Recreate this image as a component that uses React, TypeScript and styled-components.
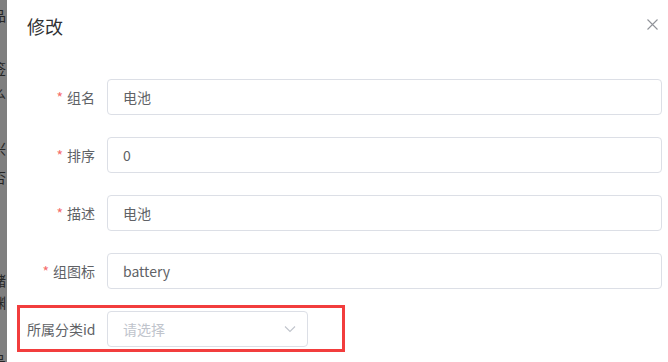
import React from "react";
import styled, { createGlobalStyle } from "styled-components";

const GlobalStyle = createGlobalStyle`
  html, body {
    margin: 0;
    padding: 0;
    background: #fff;
    font-family: "Noto Sans CJK SC", "Liberation Sans", sans-serif;
  }
  * { box-sizing: border-box; }
`;

const Page = styled.div`
  position: relative;
  display: flex;
  width: 668px;
  height: 362px;
  overflow: hidden;
`;

// the page behind the modal, mostly hidden, dimmed by the mask
const Backdrop = styled.div`
  width: 7px;
  flex-shrink: 0;
  background: #7f7f7f;
  overflow: hidden;
  display: flex;
  flex-direction: column;
`;

const Ghost = styled.span<{ $gap: number }>`
  display: block;
  margin-top: ${(p) => p.$gap}px;
  margin-left: -8px;
  font-size: 14px;
  line-height: 16px;
  color: #262626;
  white-space: nowrap;
`;

const Dialog = styled.div`
  flex: 1;
  background: #fff;
  display: flex;
  flex-direction: column;
`;

const Header = styled.div`
  display: flex;
  align-items: center;
  justify-content: space-between;
  padding: 14px 10px 11px 20px;
`;

const Title = styled.span`
  font-size: 18px;
  line-height: 24px;
  color: #303133;
`;

const Close = styled.button`
  border: none;
  background: none;
  padding: 0;
  width: 11px;
  height: 11px;
  display: flex;
  cursor: pointer;
  margin-top: -4px;
`;

const Body = styled.div`
  padding: 30px 6px 0 20px;
  display: flex;
  flex-direction: column;
  gap: 22px;
`;

const Row = styled.div`
  display: flex;
  align-items: center;
`;

const Label = styled.label`
  width: 80px;
  flex-shrink: 0;
  padding-right: 12px;
  text-align: right;
  font-size: 14px;
  line-height: 36px;
  color: #606266;
  white-space: nowrap;
`;

const Star = styled.span`
  color: #f56c6c;
  margin-right: 4px;
`;

const Field = styled.div<{ $width?: number }>`
  flex: ${(p) => (p.$width ? "none" : "1")};
  width: ${(p) => (p.$width ? `${p.$width}px` : "auto")};
  height: 36px;
  border: 1px solid #dcdfe6;
  border-radius: 4px;
  display: flex;
  align-items: center;
  justify-content: space-between;
  padding: 0 11px 0 15px;
  font-size: 14px;
  color: ${(p) => (p.$width ? "#c0c4cc" : "#606266")};
`;

const Highlight = styled.div`
  position: absolute;
  left: 17px;
  top: 305px;
  width: 328px;
  height: 47px;
  border: 3px solid #f23d3d;
  pointer-events: none;
`;

const rows = [
  { label: "组名", value: "电池" },
  { label: "排序", value: "0" },
  { label: "描述", value: "电池" },
  { label: "组图标", value: "battery" },
];

export default function App() {
  return (
    <Page>
      <GlobalStyle />
      <Backdrop>
        <Ghost $gap={7}>品</Ghost>
        <Ghost $gap={37}>签</Ghost>
        <Ghost $gap={8}>么</Ghost>
        <Ghost $gap={40}>兴</Ghost>
        <Ghost $gap={13}>否</Ghost>
        <Ghost $gap={87}>储</Ghost>
        <Ghost $gap={6}>渊</Ghost>
        <Ghost $gap={42}>品</Ghost>
      </Backdrop>
      <Dialog>
        <Header>
          <Title>修改</Title>
          <Close aria-label="close">
            <svg width="11" height="11" viewBox="0 0 11 11">
              <path d="M0.5 0.5L10.5 10.5M10.5 0.5L0.5 10.5" stroke="#909399" strokeWidth="1.1" fill="none" />
            </svg>
          </Close>
        </Header>
        <Body>
          {rows.map((r) => (
            <Row key={r.label}>
              <Label>
                <Star>*</Star>
                {r.label}
              </Label>
              <Field>{r.value}</Field>
            </Row>
          ))}
          <Row>
            <Label>所属分类id</Label>
            <Field $width={201}>
              请选择
              <svg width="12" height="8" viewBox="0 0 12 8">
                <path d="M1 1.5L6 6.5L11 1.5" stroke="#c0c4cc" strokeWidth="1.1" fill="none" />
              </svg>
            </Field>
          </Row>
        </Body>
      </Dialog>
      <Highlight />
    </Page>
  );
}
